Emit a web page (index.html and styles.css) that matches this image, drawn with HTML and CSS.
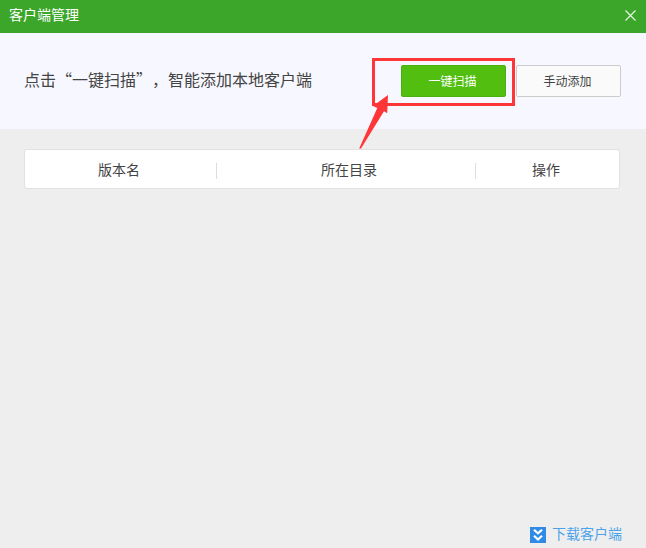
FILE: index.html
```
<!DOCTYPE html>
<html lang="zh-CN">
<head>
<meta charset="utf-8">
<title>客户端管理</title>
<link rel="stylesheet" href="styles.css">
</head>
<body>
<div class="window">
  <header class="titlebar">
    <h1 class="title">客户端管理</h1>
    <svg class="close" width="11" height="11" viewBox="0 0 11 11"><path d="M.5 .5 10.5 10.5M10.5 .5 .5 10.5"/></svg>
  </header>
  <section class="banner">
    <p class="hint">点击“一键扫描”，智能添加本地客户端</p>
    <div class="actions">
      <button class="btn primary">一键扫描</button>
      <button class="btn">手动添加</button>
    </div>
  </section>
  <main class="content">
    <div class="table-head">
      <div class="cell name">版本名</div>
      <div class="cell path">所在目录</div>
      <div class="cell">操作</div>
    </div>
  </main>
  <footer class="footer">
    <a class="download">
      <svg width="16" height="16" viewBox="0 0 16 16"><rect width="16" height="16" fill="#318be6"/><path d="M4 2.7 8 6.3 12 2.7M4 8.7 8 12.5 12 8.7" fill="none" stroke="#fff" stroke-width="2.2"/></svg>
      <span class="label">下载客户端</span>
    </a>
  </footer>
  <div class="highlight"></div>
  <svg class="arrow" width="32" height="56" viewBox="0 0 32 56"><path d="M30 2 29.2 20.3 26 18.3 3 55.5H1.2L19.3 15 15 13Z"/></svg>
</div>
</body>
</html>
```
FILE: styles.css
```
* { box-sizing: border-box; }
body {
  margin: 0;
  font-family: "Noto Sans CJK SC", sans-serif;
  font-weight: 400;
  color: #444;
}
.window {
  position: relative;
  display: flex;
  flex-direction: column;
  height: 548px;
  background: #eee;
  overflow: hidden;
}
.titlebar {
  display: flex;
  align-items: center;
  justify-content: space-between;
  height: 33px;
  padding: 0 10px 2px 9px;
  background: #3ba629;
}
.title {
  margin: 0;
  padding-bottom: 3px;
  font-size: 14px;
  line-height: 20px;
  font-weight: 400;
  color: #fff;
}
.close { fill: none; stroke: #e5f5e2; stroke-width: 1.2; }
.banner {
  display: flex;
  align-items: center;
  justify-content: space-between;
  height: 96px;
  padding: 0 25px 0 24px;
  background: #f7f7ff;
}
.hint {
  margin: 0;
  padding-bottom: 4px;
  font-size: 16px;
  line-height: 24px;
  white-space: nowrap;
  font-feature-settings: "fwid";
  text-spacing-trim: space-all;
}
.actions { display: flex; gap: 10px; }
.btn {
  width: 105px;
  height: 32px;
  padding: 0 2px 0 0;
  border: 1px solid #ccc;
  border-radius: 2px;
  background: #fafafa;
  font: inherit;
  font-size: 12px;
  line-height: 30px;
  color: #444;
}
.primary { border-color: #49b010; background: #52bf10; color: #fff; }
.content { flex: 1; padding: 20px 26px 0 24px; }
.table-head {
  display: grid;
  grid-template-columns: 192px 259px 1fr;
  align-items: center;
  height: 40px;
  padding-top: 3px;
  border: 1px solid #e1e1e1;
  border-radius: 3px;
  background: #fff;
}
.cell {
  height: 16px;
  border-right: 1px solid #ddd;
  font-size: 14px;
  line-height: 13px;
  text-align: center;
}
.name { padding-right: 3px; }
.path { padding-left: 6px; }
.cell:last-child { border: 0; padding-right: 3px; }
.footer {
  display: flex;
  justify-content: flex-end;
  padding: 0 24px 3px 0;
}
.download {
  display: flex;
  align-items: center;
  gap: 6px;
  height: 20px;
  font-size: 14px;
  line-height: 20px;
  color: #4da3ea;
}
.label { padding-bottom: 4px; }
.highlight {
  position: absolute;
  left: 372px;
  top: 58px;
  width: 143px;
  height: 48px;
  border: 3px solid #ff3638;
}
.arrow { position: absolute; left: 358px; top: 93px; fill: #ff3638; }
```
